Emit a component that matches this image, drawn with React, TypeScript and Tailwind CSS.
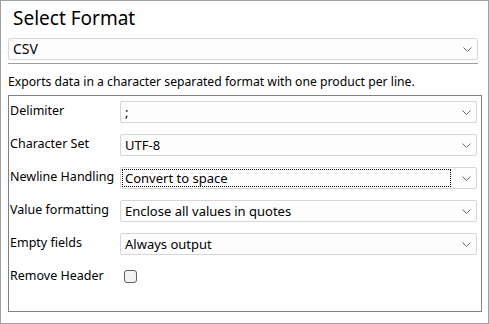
import { useState } from 'react';

const font = { fontFamily: '"Noto Sans", "Open Sans", sans-serif' };

function Chevron() {
  return (
    <svg width="9" height="5" viewBox="0 0 9 5" className="shrink-0">
      <path d="M0.5 0.5 L4.5 4.5 L8.5 0.5" fill="none" stroke="#6b6b6b" strokeWidth="1" />
    </svg>
  );
}

function Dropdown({ value, focused, className = '', textClass = 'text-[13px]' }: { value: string; focused?: boolean; className?: string; textClass?: string }) {
  return (
    <div className={`h-[22px] flex items-center border border-[#d6d6d6] bg-[#fdfdfd] rounded-[2px] ${className}`}>
      <div className={`flex-1 h-[16px] ml-[2px] mr-[10px] pl-[2px] flex items-center leading-none ${focused ? 'outline outline-1 outline-dotted outline-black' : ''}`}>
        <span className={`${textClass} text-black`}>{value}</span>
      </div>
      <div className="w-[12px] mr-[4px] flex justify-center">
        <Chevron />
      </div>
    </div>
  );
}

const rows = [
  { label: 'Delimiter', value: ';' },
  { label: 'Character Set', value: 'UTF-8' },
  { label: 'Newline Handling', value: 'Convert to space', focused: true },
  { label: 'Value formatting', value: 'Enclose all values in quotes' },
  { label: 'Empty fields', value: 'Always output' },
];

export default function App() {
  const [removeHeader, setRemoveHeader] = useState(false);

  return (
    <div className="w-[489px] h-[324px] border border-[#a0a0a0] bg-white text-black" style={font}>
      <div className="pl-[12px] pt-[3px] h-[37px] text-[19px] leading-[28px]">Select Format</div>

      <Dropdown value="CSV" className="ml-[7px] w-[470px]" textClass="text-[14px]" />

      <div className="ml-[7px] w-[470px] mt-[3px] border-t border-[#a0a0a0]" />

      <div className="pl-[7px] pt-[9px] h-[31px] text-[12.2px] leading-[17px]">
        Exports data in a character separated format with one product per line.
      </div>

      <div className="ml-[7px] w-[474px] h-[217px] border border-[#7d8189] pt-[5px]">
        {rows.map(r => (
          <div key={r.label} className="flex h-[33px]">
            <div className="w-[111px] pl-[1px] pt-[1px] text-[12.5px] leading-[17px]">{r.label}</div>
            <Dropdown value={r.value} focused={r.focused} className="w-[357px]" />
          </div>
        ))}
        <div className="flex h-[33px]">
          <div className="w-[111px] pl-[1px] pt-[1px] text-[12.5px] leading-[17px]">Remove Header</div>
          <button
            onClick={() => setRemoveHeader(!removeHeader)}
            className="mt-[4px] ml-[4px] w-[13px] h-[13px] rounded-[3px] border border-[#5f5f5f] bg-[#f3f3f3]"
          >
            {removeHeader && <span className="block text-[10px] leading-none">✓</span>}
          </button>
        </div>
      </div>
    </div>
  );
}
